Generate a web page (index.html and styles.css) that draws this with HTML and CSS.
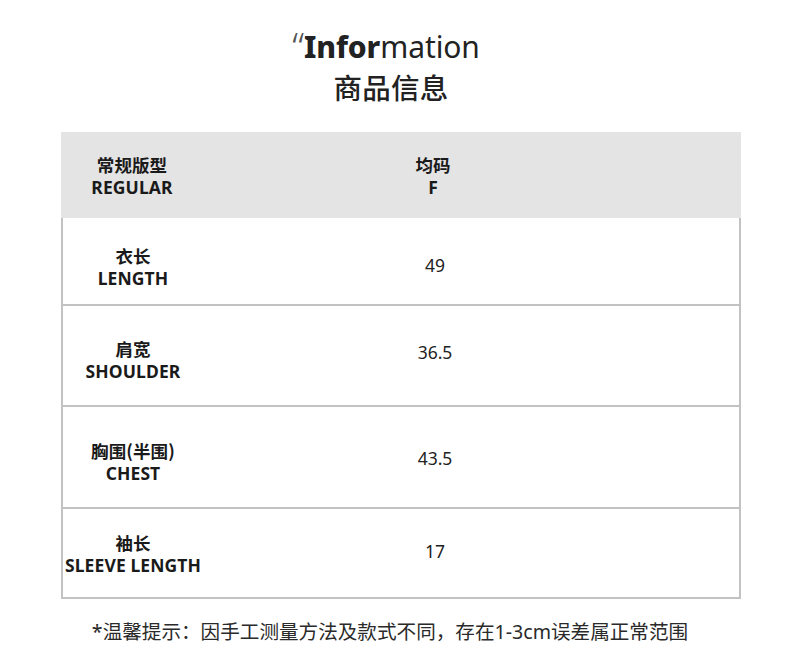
FILE: index.html
```html
<!DOCTYPE html>
<html lang="zh-CN">
<head>
<meta charset="utf-8">
<title>Information 商品信息</title>
<link rel="stylesheet" href="styles.css">
</head>
<body>
<div class="page">
  <header class="title">
    <div class="title-en"><span class="quote">“</span><b>Infor</b>mation</div>
    <div class="title-cn">商品信息</div>
  </header>
  <div class="table">
    <div class="row head">
      <div class="label"><span>常规版型</span><span>REGULAR</span></div>
      <div class="value bold"><span>均码</span><span>F</span></div>
    </div>
    <div class="row r1">
      <div class="label"><span>衣长</span><span>LENGTH</span></div>
      <div class="value">49</div>
    </div>
    <div class="row r2">
      <div class="label"><span>肩宽</span><span>SHOULDER</span></div>
      <div class="value">36.5</div>
    </div>
    <div class="row r3">
      <div class="label"><span>胸围(半围)</span><span>CHEST</span></div>
      <div class="value">43.5</div>
    </div>
    <div class="row r4">
      <div class="label"><span>袖长</span><span>SLEEVE LENGTH</span></div>
      <div class="value">17</div>
    </div>
  </div>
  <p class="note">*温馨提示：因手工测量方法及款式不同，存在1-3cm误差属正常范围</p>
</div>
</body>
</html>
```
FILE: styles.css
```css
* { box-sizing: border-box; }
html, body { margin: 0; padding: 0; background: #fff; }
body {
  font-family: "Noto Sans", "Noto Sans CJK SC", sans-serif;
  color: #1e1e1e;
}
.page { width: 790px; height: 663px; overflow: hidden; }

.title { display: flex; flex-direction: column; align-items: center; padding-top: 26px; padding-right: 14px; }
.title-en {
  font-size: 30px;
  line-height: 42px;
  font-weight: 400;
  color: #222;
  letter-spacing: -0.1px;
  margin-left: -4px;
}
.title-en b { font-weight: 800; }
.quote {
  display: inline-block;
  font-size: 38px;
  font-weight: 300;
  vertical-align: top;
  line-height: 40px;
  margin-right: 0;
  color: #555;
}
.title-cn {
  font-family: "Noto Sans CJK SC", sans-serif;
  font-size: 28.5px;
  line-height: 38px;
  font-weight: 500;
  color: #222;
  letter-spacing: 0.3px;
  margin-left: 6px;
}

.table { margin: 26px 0 0 61px; width: 680px; }
.row {
  display: grid;
  grid-template-columns: 142px 460px 1fr;
  align-items: center;
  border-left: 2px solid #c2c2c2;
  border-right: 2px solid #c2c2c2;
  border-bottom: 2px solid #c2c2c2;
}
.row.head { background: #e4e4e4; border: none; height: 86px; padding-top: 1px; }
.row.r1 { height: 88px; padding-top: 12px; }
.row.r2 { height: 101px; padding-top: 8px; }
.row.r3 { height: 102px; padding-top: 10px; }
.row.r4 { height: 90px; padding-top: 2px; }

.label, .value {
  display: flex;
  flex-direction: column;
  align-items: center;
  text-align: center;
}
.label { margin-left: -2px; font-size: 17.5px; font-weight: 700; line-height: 23px; color: #1a1a1a; letter-spacing: 0.1px; }
.label span:first-child { font-family: "Noto Sans CJK SC", sans-serif; font-size: 17.5px; }
.row.head .label { margin-left: 0; }
.value { font-size: 17.5px; line-height: 23px; color: #222; }
.row.r1 .value { margin-top: -4px; }
.row.r2 .value { margin-top: -14px; }
.row.r3 .value { margin-top: -8px; }
.row.r4 .value { margin-top: -6px; }
.value.bold { font-weight: 700; color: #1a1a1a; }
.value.bold span:first-child { font-family: "Noto Sans CJK SC", sans-serif; }

.note {
  margin: 20px 0 0 0;
  text-align: center;
  font-family: "Noto Sans", "Noto Sans CJK SC", sans-serif;
  font-size: 19.6px;
  line-height: 26px;
  color: #2a2a2a;
  padding-right: 10px;
}
```
